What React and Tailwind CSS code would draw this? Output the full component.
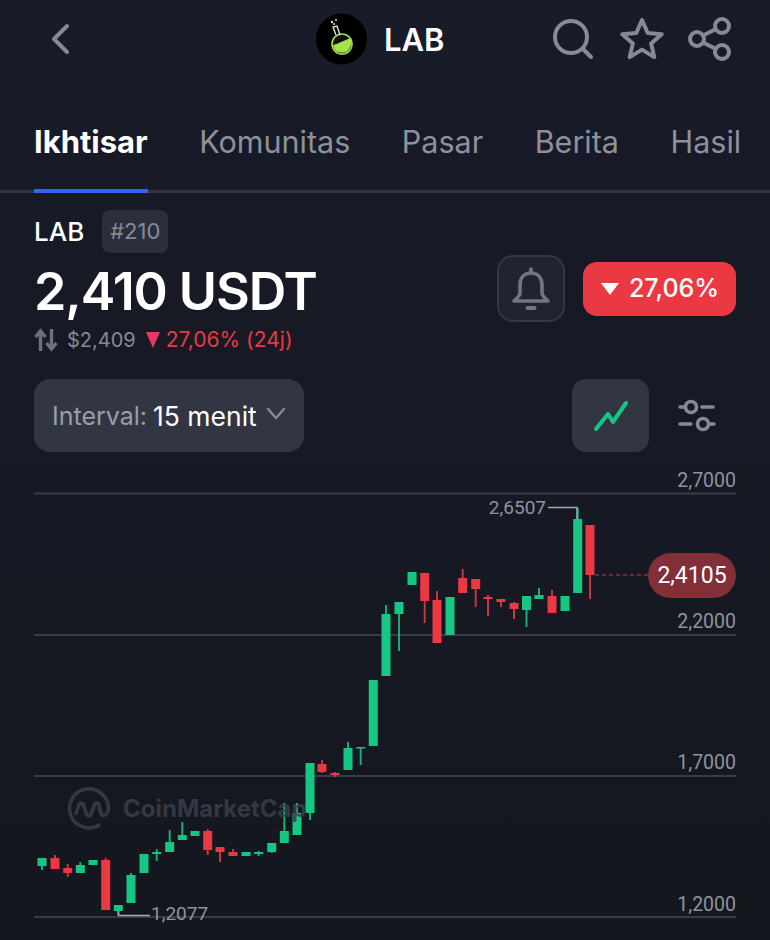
const GREEN = '#16c784'
const RED = '#ea3943'

// x, body top, body bottom, wick top, wick bottom, up?
const candles = [
  [42, 858, 866, 858, 870, 1],
  [55, 858, 869, 855, 869, 0],
  [67.7, 868, 873, 864, 877, 0],
  [80.3, 865, 873, 862, 873, 1],
  [93, 860, 865, 860, 865, 1],
  [105.7, 860, 910, 858, 910, 0],
  [118.3, 905, 911, 905, 915, 1],
  [131, 875, 903, 873, 903, 1],
  [144, 854, 873, 854, 873, 1],
  [156.7, 852, 854, 849, 861, 1],
  [169.7, 842, 852, 830, 852, 1],
  [182.3, 835, 840, 822, 840, 1],
  [195, 831, 836, 831, 836, 1],
  [207.7, 831, 850, 829, 855, 0],
  [220, 847, 852, 847, 862, 0],
  [233, 852, 856, 849, 856, 0],
  [246, 852, 856, 852, 856, 1],
  [258.7, 852, 854, 851, 856, 1],
  [271.7, 843, 852, 843, 853, 1],
  [284.3, 831, 843, 803, 843, 1],
  [297, 813, 835, 803, 835, 1],
  [310, 763, 813, 763, 820, 1],
  [322, 764, 772, 760, 773, 0],
  [335, 773, 775, 772, 777, 0],
  [348, 748, 770, 742, 770, 1],
  [360.7, 747, 748.5, 747, 765, 1],
  [373.3, 680, 746, 680, 746, 1],
  [386, 614, 676, 605, 676, 1],
  [399, 602, 614, 602, 651, 1],
  [412, 572, 585, 572, 585, 1],
  [424.7, 573, 601, 573, 623, 0],
  [437, 600, 643, 591, 643, 0],
  [450, 597, 635, 597, 635, 1],
  [462.7, 578, 593, 569, 593, 0],
  [475.7, 579, 589, 579, 607, 0],
  [488, 597, 599, 595, 616, 0],
  [501, 599, 602, 599, 607, 0],
  [514, 603, 609, 602, 619, 0],
  [526.5, 596, 610, 596, 627, 1],
  [539, 595, 599, 588, 599, 1],
  [552, 596, 613, 590, 613, 0],
  [565, 596, 611, 596, 611, 1],
  [577.7, 519, 593, 508, 593, 1],
  [590, 525, 575, 525, 599, 0],
]

const gridLines = [493.5, 635, 776, 917]
const axisLabels = [
  ['2,7000', 487],
  ['2,2000', 628],
  ['1,7000', 769],
  ['1,2000', 911],
]

const tabs = ['Komunitas', 'Pasar', 'Berita', 'Hasil']

function Header() {
  return (
    <div className="relative flex h-[80px] items-center justify-between pl-[47px] pr-[38px]">
      <svg width="26" height="34" viewBox="0 0 26 34" fill="none" stroke="#858a98" strokeWidth="4" strokeLinecap="round" strokeLinejoin="round" className="-mt-[2px]">
        <path d="M20 4 7 17l13 13" />
      </svg>
      <div className="absolute left-[316px] top-[13px] flex items-center gap-[17px]">
        <svg width="51" height="52" viewBox="0 0 51 52">
          <circle cx="25.5" cy="26" r="25.5" fill="#000" />
          <circle cx="26" cy="31" r="10" fill="#10130c" stroke="#a5d84f" strokeWidth="1.6" />
          <path d="M17 32c4-1 10-4 18-7 1 5 0 11-5 14-5 2-12 0-13-7z" fill="#a5e34f" />
          <path d="M20 22 17 14l4-1 3 9" fill="none" stroke="#d8e8c0" strokeWidth="1.4" />
          <circle cx="16" cy="9" r="1.2" fill="#d8e8c0" />
          <circle cx="20" cy="7" r="1" fill="#d8e8c0" />
          <circle cx="18" cy="11" r="1" fill="#d8e8c0" />
        </svg>
        <span className="text-[31px] font-semibold leading-none text-white">LAB</span>
      </div>
      <div className="flex items-center -mt-[2px]">
        <svg width="42" height="42" viewBox="0 0 42 42" fill="none" stroke="#858a98" strokeWidth="4" strokeLinecap="round">
          <circle cx="19" cy="19" r="16" />
          <path d="m31 31 8 8" />
        </svg>
        <svg width="44" height="44" viewBox="0 0 44 44" fill="none" stroke="#858a98" strokeWidth="4" strokeLinejoin="round" className="ml-[26px]">
          <path d="m22 3 5.7 13 14 1.2-10.6 9.2 3.2 13.7L22 32.6 9.7 40.1l3.2-13.7L2.300 17.200l14-1.200z" />
        </svg>
        <svg width="44" height="44" viewBox="0 0 44 44" fill="none" stroke="#858a98" strokeWidth="4" className="ml-[24px]">
          <circle cx="34" cy="9" r="7" />
          <circle cx="9" cy="22" r="7" />
          <circle cx="34" cy="35" r="7" />
          <path d="m15 18.500 13-6.500M15 25.500l13 6.500" />
        </svg>
      </div>
    </div>
  )
}

function TabBar() {
  return (
    <div className="h-[80px] mt-[33px] border-b-[3px] border-[#31343f]">
      <div className="flex gap-[51.5px] pl-[34px] whitespace-nowrap">
        <div className="relative h-[77px] pt-[11px] text-[31px] leading-[36px] font-bold text-white">
          Ikhtisar
          <div className="absolute bottom-[-3px] left-0 right-0 h-[4px] bg-[#3861fb]"></div>
        </div>
        {tabs.map((tab) => (
          <div key={tab} className="pt-[11px] text-[30.5px] leading-[36px] text-[#8d919c]">{tab}</div>
        ))}
      </div>
    </div>
  )
}

function PriceBlock() {
  return (
    <div className="flex items-start justify-between pl-[34px] pr-[34px] pt-[17px]">
      <div>
        <div className="flex items-center gap-[18px]">
          <span className="text-[26px] font-medium leading-none text-white">LAB</span>
          <span className="flex h-[43px] w-[66px] items-center justify-center rounded-[8px] bg-[#2b2f3c] text-[22px] text-[#858a98]">#210</span>
        </div>
        <div className="mt-[10px] text-[52px] font-semibold leading-[58px] tracking-[-1.1px] text-white">2,410 USDT</div>
        <div className="mt-[5px] flex items-center text-[21px] leading-[28px]">
          <svg width="24" height="24" viewBox="0 0 24 24" fill="none" stroke="#6d717d" strokeWidth="3.400">
            <path d="M6.500 23V3M1.500 9l5-6 5 6" />
            <path d="M17.500 1v20M12.500 15l5 6 5-6" />
          </svg>
          <span className="ml-[9px] text-[20px] text-[#858a98]">$2,409</span>
          <svg width="14" height="16" viewBox="0 0 14 16" className="ml-[10px]">
            <path d="M0 0h14L7 16z" fill="#ea3960" />
          </svg>
          <span className="ml-[6px] text-[#ea3943]">27,06% (24j)</span>
        </div>
      </div>
      <div className="flex items-center gap-[18px] pt-[45px]">
        <div className="flex h-[67px] w-[68px] items-center justify-center rounded-[16px] border-2 border-[#343843] bg-[#21242f]">
          <svg width="40" height="44" viewBox="0 0 40 44" fill="none" stroke="#717684" strokeWidth="3.600" strokeLinejoin="round" strokeLinecap="round">
            <path d="M20 6c-7 0-11 5-11 12v8c0 3-3 5-6 8h34c-3-3-6-5-6-8v-8c0-7-4-12-11-12z" />
            <path d="M20 2v3" />
            <path d="M16.500 41h7" strokeWidth="4" />
          </svg>
        </div>
        <div className="flex h-[54px] w-[153px] items-center justify-center gap-[9px] rounded-[14px] bg-[#ea3943] text-[25px] font-medium text-white">
          <svg width="20" height="12" viewBox="0 0 20 12">
            <path d="M1 0h18L10 12z" fill="#fff" />
          </svg>
          27,06%
        </div>
      </div>
    </div>
  )
}

function Controls() {
  return (
    <div className="mt-[25px] flex items-center justify-between pl-[34px] pr-[54px]">
      <div className="flex h-[73px] w-[270px] items-center rounded-[16px] bg-[#323643] pl-[18px] pt-[2px] text-[25px]">
        <span className="text-[#9a9ea9]">Interval:</span>
        <span className="ml-[6px] text-[26.5px] text-white">15 menit</span>
        <svg width="20" height="13" viewBox="0 0 20 13" fill="none" stroke="#858a98" strokeWidth="2.500" strokeLinecap="round" strokeLinejoin="round" className="ml-[9px] -mt-[6px]">
          <path d="m2 2 8 9 8-9" />
        </svg>
      </div>
      <div className="flex items-center gap-[29px]">
        <div className="flex h-[73px] w-[77px] items-center justify-center rounded-[14px] bg-[#323643]">
          <svg width="36" height="32" viewBox="0 0 36 32" fill="none" stroke="#16c784" strokeWidth="4" strokeLinecap="round" strokeLinejoin="round">
            <path d="m3 29 12-15 5 8L33 3" />
          </svg>
        </div>
        <svg width="38" height="34" viewBox="0 0 38 34" fill="none" stroke="#858a98" strokeWidth="3.600" strokeLinecap="round">
          <circle cx="13" cy="8" r="5.500" />
          <path d="M2 8h5M24 8h11" />
          <circle cx="25" cy="25" r="5.500" />
          <path d="M2 25h11M31 25h5" />
        </svg>
      </div>
    </div>
  )
}

function Candle({ x, top, bottom, wickTop, wickBottom, up }) {
  const color = up ? GREEN : RED
  return (
    <g>
      <line x1={x} x2={x} y1={wickTop} y2={wickBottom} stroke={color} strokeOpacity="0.85" strokeWidth="2" />
      <rect x={x - 4.500} y={top} width="9" height={bottom - top} fill={color} />
    </g>
  )
}

function Chart() {
  return (
    <div className="mt-[18px] h-[470px]">
      <svg width="770" height="470" viewBox="0 470 770 470" className="block font-[family-name:Roboto,sans-serif]">
        {gridLines.map((y) => (
          <line key={y} x1="34" x2="736" y1={y} y2={y} stroke="#3a3d47" strokeWidth="2" />
        ))}
        {axisLabels.map(([label, y]) => (
          <text key={label} x="736" y={y} textAnchor="end" fontSize="19.5" fill="#8f939e">{label}</text>
        ))}

        {candles.map(([x, top, bottom, wickTop, wickBottom, up]) => (
          <Candle key={x} x={x} top={top} bottom={bottom} wickTop={wickTop} wickBottom={wickBottom} up={up} />
        ))}

        {/* watermark sits over the candles */}
        <path
          d="M100 824.500A19.500 19.500 0 1 1 108.500 808c0 4-2 7-4.500 7.500-2 .3-3-1.500-3.500-3.500l-1.500-7c-.6-2.500-3.500-2.500-4.500 0l-3.500 9c-1 2.500-3.500 2.500-4.500 0l-3-9c-.8-2.500-3.500-2.500-4.500 0l-3.500 10"
          fill="none"
          stroke="#3b3e49"
          strokeWidth="3.600"
          opacity="0.85"
        />
        <text x="123" y="817" fontSize="24" fontWeight="700" fontFamily="Inter, sans-serif" fill="#3b3e49" opacity="0.85">CoinMarketCap</text>

        <text x="546" y="514" textAnchor="end" fontSize="19" fill="#8f939e">2,6507</text>
        <path d="M548 507.500h29V519" fill="none" stroke="#a5a8b1" strokeWidth="1.500" />
        <text x="151" y="920" fontSize="19" fill="#8f939e">1,2077</text>
        <path d="M118.500 911v4.500H150" fill="none" stroke="#a5a8b1" strokeWidth="1.500" />

        <line x1="595" x2="648" y1="575" y2="575" stroke="#8a2f39" strokeWidth="1.500" strokeDasharray="4 3" />
        <rect x="648" y="553" width="88" height="45" rx="22.500" fill="#832f38" />
        <text x="692" y="583" textAnchor="middle" fontSize="23" fill="#fff">2,4105</text>
      </svg>
    </div>
  )
}

export default function App() {
  return (
    <div className="h-[940px] w-[770px] overflow-hidden bg-linear-to-b from-[#181b28] to-[#15171f] font-[family-name:Inter,sans-serif]">
      <Header />
      <TabBar />
      <PriceBlock />
      <Controls />
      <Chart />
    </div>
  )
}
